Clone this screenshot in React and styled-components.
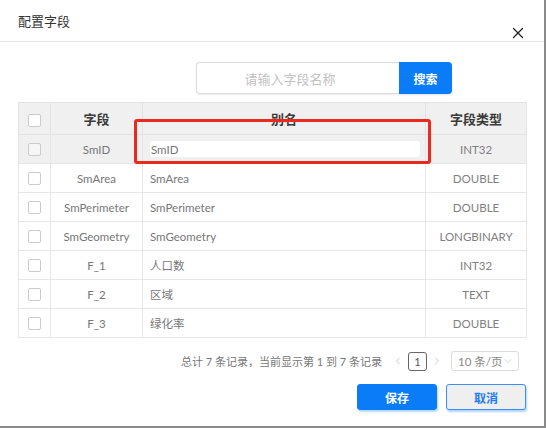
import styled, { createGlobalStyle } from "styled-components";
import { X, ChevronLeft, ChevronRight, ChevronDown } from "lucide-react";

const GlobalStyle = createGlobalStyle`
  html, body {
    margin: 0;
    padding: 0;
    background: #ffffff;
  }
  * {
    box-sizing: border-box;
  }
`;

const fields = [
  { name: "SmID", alias: "SmID", type: "INT32", editing: true },
  { name: "SmArea", alias: "SmArea", type: "DOUBLE" },
  { name: "SmPerimeter", alias: "SmPerimeter", type: "DOUBLE" },
  { name: "SmGeometry", alias: "SmGeometry", type: "LONGBINARY" },
  { name: "F_1", alias: "人口数", type: "INT32" },
  { name: "F_2", alias: "区域", type: "TEXT" },
  { name: "F_3", alias: "绿化率", type: "DOUBLE" },
];

export default function App() {
  return (
    <>
      <GlobalStyle />
      <Dialog>
        <Header>
          <Title>配置字段</Title>
          <CloseButton>
            <X size={18} strokeWidth={1.7} />
          </CloseButton>
        </Header>

        <Body>
          <SearchBar>
            <SearchInput placeholder="请输入字段名称" />
            <SearchButton>搜索</SearchButton>
          </SearchBar>

          <Table>
            <colgroup>
              <col style={{ width: 32 }} />
              <col style={{ width: 92 }} />
              <col style={{ width: 283 }} />
              <col style={{ width: 101 }} />
            </colgroup>
            <thead>
              <tr>
                <Th>
                  <Checkbox />
                </Th>
                <Th>字段</Th>
                <Th>别名</Th>
                <Th>字段类型</Th>
              </tr>
            </thead>
            <tbody>
              {fields.map((f) => (
                <Row key={f.name} $active={f.editing}>
                  <Td>
                    <Checkbox $muted={f.editing} />
                  </Td>
                  <Td>{f.name}</Td>
                  <AliasCell>
                    {f.editing ? <AliasInput defaultValue={f.alias} /> : f.alias}
                  </AliasCell>
                  <TypeCell>{f.type}</TypeCell>
                </Row>
              ))}
            </tbody>
          </Table>

          <Pager>
            <PagerText>总计 7 条记录，当前显示第 1 到 7 条记录</PagerText>
            <PagerArrow>
              <ChevronLeft size={12} strokeWidth={1.5} />
            </PagerArrow>
            <PageNumber>1</PageNumber>
            <PagerArrow>
              <ChevronRight size={12} strokeWidth={1.5} />
            </PagerArrow>
            <PageSize>
              <span>10 条/页</span>
              <ChevronDown size={12} strokeWidth={1.3} />
            </PageSize>
          </Pager>

          <Actions>
            <PrimaryButton>保存</PrimaryButton>
            <CancelButton>取消</CancelButton>
          </Actions>
        </Body>

        <Highlight />
      </Dialog>
    </>
  );
}

const Dialog = styled.div`
  position: relative;
  width: 546px;
  height: 428px;
  background: #ffffff;
  border-right: 2px solid #8a8a8a;
  border-bottom: 2px solid #8a8a8a;
  font-family: "Lato", "Noto Sans CJK SC", sans-serif;
  color: #666;
`;

const Header = styled.div`
  position: relative;
  height: 42px;
  padding: 13px 18px 0;
  border-bottom: 1px solid #e3e3e3;
`;

const Title = styled.div`
  font-size: 13px;
  line-height: 16px;
  color: #333;
  font-family: "Noto Sans CJK SC", sans-serif;
`;

const CloseButton = styled.div`
  position: absolute;
  right: 17px;
  top: 24px;
  width: 18px;
  height: 18px;
  display: flex;
  color: #222;
`;

const Body = styled.div`
  padding: 20px 18px 0;
`;

const SearchBar = styled.div`
  display: flex;
  height: 32px;
  margin-left: 178px;
  width: 256px;
  margin-bottom: 8px;
`;

const SearchInput = styled.input`
  flex: 1;
  min-width: 0;
  height: 32px;
  border: 1px solid #dcdcdc;
  border-right: none;
  border-radius: 4px 0 0 4px;
  box-shadow: 0 1px 2px rgba(0, 0, 0, 0.08);
  text-align: center;
  padding: 0 16px 0 0;
  font-family: "Noto Sans CJK SC", sans-serif;
  font-size: 13px;
  outline: none;
  &::placeholder {
    color: #c2c2c2;
  }
`;

const SearchButton = styled.button`
  width: 53px;
  height: 32px;
  border: none;
  border-radius: 0 4px 4px 0;
  background: #0a7cf8;
  color: #fff;
  font-family: "Noto Sans CJK SC", sans-serif;
  font-size: 12px;
  font-weight: 700;
  box-shadow: 0 1px 2px rgba(0, 0, 0, 0.12);
  padding: 0;
`;

const Table = styled.table`
  width: 508px;
  border-collapse: collapse;
  table-layout: fixed;
  border: 1px solid #e6e6e6;
`;

const Th = styled.th`
  height: 32px;
  background: #f0f0f0;
  border: 1px solid #e3e3e3;
  font-family: "Noto Sans CJK SC", sans-serif;
  font-size: 13px;
  font-weight: 700;
  color: #3a3a3a;
  text-align: center;
  padding: 0;
  vertical-align: middle;
`;

const Row = styled.tr`
  background: ${({ $active }) => ($active ? "#f0f0f0" : "#ffffff")};
`;

const Td = styled.td`
  height: 29px;
  border: 1px solid #e6e6e6;
  font-size: 11.5px;
  text-align: center;
  color: #777;
  padding: 0;
  vertical-align: middle;
  white-space: nowrap;
`;

const AliasCell = styled(Td)`
  text-align: left;
  padding: 0 6px 0 7px;
`;

const TypeCell = styled(Td)`
  color: #808080;
`;

const AliasInput = styled.input`
  display: block;
  width: 270px;
  height: 16px;
  border: none;
  border-radius: 3px;
  background: #fff;
  padding: 0 1px;
  font-family: "Lato", sans-serif;
  font-size: 11.5px;
  color: #777;
  outline: none;
`;

const Checkbox = styled.span`
  display: inline-block;
  width: 13px;
  height: 13px;
  border: 1px solid #cbcbcb;
  border-radius: 2px;
  background: ${({ $muted }) => ($muted ? "#f6f6f6" : "#fff")};
  vertical-align: middle;
`;

const Pager = styled.div`
  display: flex;
  align-items: center;
  justify-content: flex-end;
  padding-right: 7px;
  margin-top: 13px;
  height: 20px;
  white-space: nowrap;
`;

const PagerText = styled.span`
  font-size: 11px;
  color: #777;
  margin-right: 8px;
`;

const PagerArrow = styled.span`
  display: flex;
  color: #bbb;
  margin: 0 2px;
`;

const PageNumber = styled.span`
  width: 19px;
  height: 19px;
  border: 1px solid #666;
  border-radius: 3px;
  display: flex;
  align-items: center;
  justify-content: center;
  font-size: 11px;
  color: #555;
  margin: 0 2px;
`;

const PageSize = styled.span`
  display: flex;
  flex-shrink: 0;
  align-items: center;
  justify-content: space-between;
  width: 68px;
  height: 20px;
  margin-left: 6px;
  padding: 0 4px 0 6px;
  border: 1px solid #dcdcdc;
  border-radius: 3px;
  font-size: 11.5px;
  color: #888;
  svg {
    color: #bbb;
  }
`;

const Actions = styled.div`
  display: flex;
  justify-content: flex-end;
  gap: 9px;
  margin-top: 13px;
`;

const BaseButton = styled.button`
  width: 80px;
  height: 26px;
  border-radius: 3px;
  font-family: "Noto Sans CJK SC", sans-serif;
  font-size: 12px;
  font-weight: 700;
  padding: 0;
`;

const PrimaryButton = styled(BaseButton)`
  background: #0a7cf8;
  border: 1px solid #0a7cf8;
  color: #fff;
  box-shadow: 1px 2px 2px rgba(10, 124, 248, 0.3);
`;

const CancelButton = styled(BaseButton)`
  background: #efefef;
  border: 1px solid #3b8ef5;
  color: #1f7ef3;
  box-shadow: 1px 2px 2px rgba(30, 130, 250, 0.35);
`;

const Highlight = styled.div`
  position: absolute;
  left: 134px;
  top: 119px;
  width: 297px;
  height: 45px;
  border: 3px solid #ea2a1f;
  border-radius: 3px;
  pointer-events: none;
`;
